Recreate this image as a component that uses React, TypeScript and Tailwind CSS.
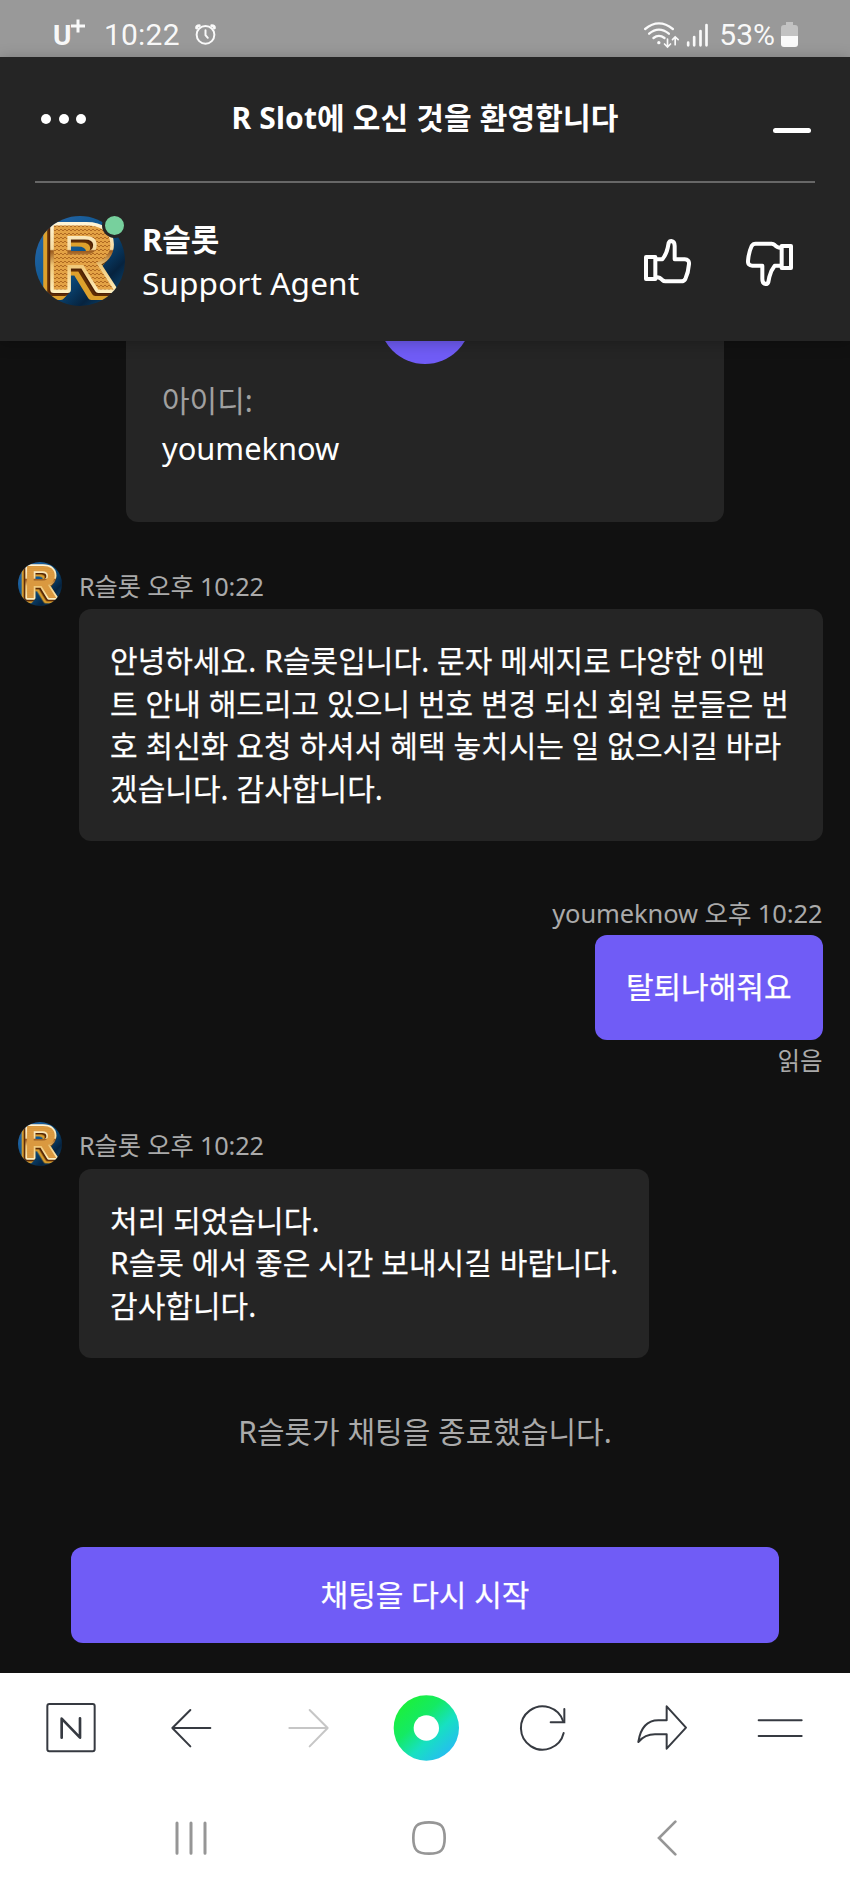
import { useId } from 'react'
import type { ReactNode } from 'react'

function Avatar({ className }: { className: string }) {
  const id = useId()

  return (
    <svg viewBox="0 0 90 90" className={`overflow-visible ${className}`}>
      <defs>
        <clipPath id={`${id}c`}>
          <circle cx="45" cy="45" r="45" />
        </clipPath>
        <linearGradient id={`${id}b`} x1="0" y1="0" x2="1" y2="1">
          <stop offset="0" stopColor="#2c6bb0" />
          <stop offset="0.5" stopColor="#0a5288" />
          <stop offset="0.75" stopColor="#06233f" />
          <stop offset="1" stopColor="#0a568a" />
        </linearGradient>
        <linearGradient id={`${id}e`} gradientUnits="userSpaceOnUse" x1="0" y1="6" x2="0" y2="78">
          <stop offset="0" stopColor="#fff6da" />
          <stop offset="0.38" stopColor="#f5dba0" />
          <stop offset="0.4" stopColor="#9c5a1c" />
          <stop offset="0.6" stopColor="#f0c878" />
          <stop offset="1" stopColor="#fff2c4" />
        </linearGradient>
        <pattern id={`${id}p`} width="4" height="4" patternUnits="userSpaceOnUse">
          <rect width="4" height="4" fill="#e3a245" />
          <path d="M0 3L2 1L4 3" stroke="#b06a22" strokeWidth="1" fill="none" />
        </pattern>
      </defs>
      <g clipPath={`url(#${id}c)`}>
        <rect width="90" height="90" fill={`url(#${id}b)`} />
        <text
          x="12.5"
          y="73"
          textLength="68"
          lengthAdjust="spacingAndGlyphs"
          fill={`url(#${id}p)`}
          stroke={`url(#${id}e)`}
          strokeWidth="7"
          strokeLinejoin="round"
          className="font-['Liberation_Sans',sans-serif] text-[93px] font-bold [paint-order:stroke] [filter:drop-shadow(-1px_1px_0_#4a1f05)_drop-shadow(-2px_2px_0_#5e2c06)_drop-shadow(-4px_4px_0_#dda02c)]"
        >
          R
        </text>
      </g>
    </svg>
  )
}

function StatusBar() {
  return (
    <div className="flex h-[57px] items-center bg-[#999999] pt-[12px] pl-[53px] pr-[52px] font-['Roboto',sans-serif] text-[30px] leading-none text-white/95">
      <span className="flex w-[51px]">
        <span className="mt-[2px] text-[28px] font-bold">U</span>
        <svg viewBox="0 0 14 14" className="mt-[-1px] h-[14px] w-[14px]">
          <path d="M7 0.5V13.5M0 7H14" stroke="currentColor" strokeWidth="3" />
        </svg>
      </span>
      <span className="tracking-[0.2px]">10:22</span>
      <svg viewBox="580 70 70 68" className="ml-[14px] h-[23px] w-[23px]" fill="none" stroke="currentColor">
        <circle cx="615" cy="105" r="27" strokeWidth="6" />
        <path d="M615 91V106L622 114" strokeWidth="6" strokeLinecap="round" />
        <path d="M588 84Q588 77 596 77M634 77Q642 77 642 84" strokeWidth="9" strokeLinecap="round" />
      </svg>

      <svg viewBox="655 60 200 84" className="ml-auto h-[28px] w-[67px]" fill="none" stroke="currentColor" strokeLinecap="round">
        <path d="M661 84Q702 50 744 84M673 98Q702 74 732 98M686 111Q702 98 719 111" strokeWidth="7" />
        <circle cx="702" cy="125" r="5" fill="currentColor" stroke="none" />
        <path d="M728 114V137M719 129L728 138L737 129M751 131V109M743 116L751 108L760 116" strokeWidth="5" />
        <path d="M790 125V133M808 108V133M827 90V133M845 72V133" strokeWidth="8" />
      </svg>
      <span className="ml-[9px] tracking-[0px]">53%</span>
      <svg viewBox="0 0 17 25" className="ml-[6px] h-[25px] w-[17px]">
        <path d="M5 0H12V3H14Q17 3 17 6V14H0V6Q0 3 3 3H5Z" fill="#c2c2c2" />
        <path d="M0 14H17V22Q17 25 14 25H3Q0 25 0 22Z" fill="#fafafa" />
      </svg>
    </div>
  )
}

function Thumb({ className = '' }: { className?: string }) {
  return (
    <svg viewBox="656 147 141 135" className={`h-[45px] w-[47px] ${className}`} fill="none" stroke="white" strokeWidth="12" strokeLinejoin="round">
      <rect x="662" y="201" width="28" height="66" />
      <path d="M692 208H711Q723 193 727 174L730 159Q732 153 738 153Q748 154 748 168V208H778Q792 209 791 222Q789 248 780 267Q776 274 768 274H720Q715 274 711 270Q703 261 692 262" />
    </svg>
  )
}

function Header() {
  return (
    <header className="relative z-10 h-[284px] bg-[#252525] px-[35px] text-white shadow-[0_2px_14px_rgba(0,0,0,0.25)]">
      <div className="flex h-[126px] items-center justify-between border-b-2 border-[#676767] pl-[6px] pr-[4px]">
        <div className="flex w-[45px] justify-between">
          <span className="size-[10px] rounded-full bg-white" />
          <span className="size-[10px] rounded-full bg-white" />
          <span className="size-[10px] rounded-full bg-white" />
        </div>
        <h1 className="mr-[9px] -mt-[2px] text-[30px] font-bold leading-[40px] tracking-[0.15px]">R Slot에 오신 것을 환영합니다</h1>
        <span className="mt-[22px] h-[5px] w-[38px] rounded-full bg-white" />
      </div>
      <div className="flex items-center pt-[33px]">
        <div className="relative size-[90px]">
          <Avatar className="size-[90px]" />
          <span className="absolute -right-[2px] -top-[3px] size-[25px] rounded-full border-[3px] border-[#252525] bg-[#77d09d]" />
        </div>
        <div className="ml-[17px] text-[31.6px] leading-[43px]">
          <div className="text-[31px] font-bold">R슬롯</div>
          <div className="tracking-[0.1px]">Support Agent</div>
        </div>
        <div className="ml-auto mr-[22px] flex gap-[55px]">
          <Thumb className="mt-[2px]" />
          <Thumb className="mt-[4px] rotate-180" />
        </div>
      </div>
    </header>
  )
}

function AgentMessage({ children, className = '' }: { children: ReactNode; className?: string }) {
  return (
    <div className={`flex pl-[18px] ${className}`}>
      <Avatar className="size-[44px] shrink-0" />
      <div className="ml-[17px]">
        <div className="flex h-[47px] items-center pt-[2px] text-[25.3px] tracking-[-0.15px] text-[#aaaaaa]">R슬롯 오후 10:22</div>
        <div className="w-fit max-w-[743.5px] rounded-xl bg-[#252525] p-[31px] text-[30px] leading-[42.5px] tracking-[0.05px] break-all whitespace-pre-line text-white [-webkit-text-stroke:0.25px_white]">
          {children}
        </div>
      </div>
    </div>
  )
}

const icon = 'size-[72px] fill-none stroke-[#363a41] stroke-[6]'

function BrowserBar() {
  return (
    <nav className="grid grid-cols-7 justify-items-center px-[12px] pt-[19px]">
      <svg viewBox="105 95 216 216" className={icon} strokeLinecap="round" strokeLinejoin="round">
        <rect x="142" y="131" width="142" height="142" rx="6" />
        <path d="M185 232V175L240 232V174" className="stroke-[8]" />
      </svg>
      <svg viewBox="459 95 216 216" className={icon} strokeLinecap="round" strokeLinejoin="round">
        <path d="M631 203H517M571 149L517 203L571 258" />
      </svg>
      <svg viewBox="813 95 216 216" className="size-[72px] fill-none stroke-[#c6c6c6] stroke-[6]" strokeLinecap="round" strokeLinejoin="round">
        <path d="M868 203H983M929 149L983 203L929 258" />
      </svg>
      <svg viewBox="1167 95 216 216" className="size-[72px]">
        <defs>
          <linearGradient id="ring" x1="0.12" y1="0.12" x2="0.85" y2="0.9">
            <stop offset="0" stopColor="#1cf03a" />
            <stop offset="0.35" stopColor="#14ea63" />
            <stop offset="0.65" stopColor="#17e0c2" />
            <stop offset="1" stopColor="#26bcf2" />
          </linearGradient>
        </defs>
        <circle cx="1279" cy="203" r="98" fill="url(#ring)" />
        <circle cx="1279" cy="203" r="38" fill="white" />
      </svg>
      <svg viewBox="246 95 216 216" className={icon} strokeLinecap="round">
        <path d="M416 218A65 65 0 1 1 415 184" />
        <path d="M418 146V186H377" />
      </svg>
      <svg viewBox="600 95 216 216" className={icon} strokeLinecap="round" strokeLinejoin="round">
        <path d="M725 138L783 202L725 265V222H690Q660 222 640 245Q650 180 700 180H725Z" />
      </svg>
      <svg viewBox="954 95 216 216" className={icon} strokeLinecap="round">
        <path d="M1001 180H1130M1001 227H1130" />
      </svg>
    </nav>
  )
}

function SystemBar() {
  return (
    <div className="grid grid-cols-3 justify-items-center pl-[72px] pr-[64px] pt-[56px] text-[#969696]">
      <svg viewBox="514 479 120 108" className="h-[36px] w-[40px]" stroke="currentColor" strokeWidth="9" strokeLinecap="round">
        <path d="M532 488V579M574 488V579M616 488V579" />
      </svg>
      <svg viewBox="0 0 108 108" className="size-[36px]" fill="none" stroke="currentColor" strokeWidth="8">
        <path d="M54 7C90 7 101 18 101 54S90 101 54 101S7 90 7 54S18 7 54 7Z" />
      </svg>
      <svg viewBox="674 479 108 108" className="size-[36px]" fill="none" stroke="currentColor" strokeWidth="8" strokeLinecap="round">
        <path d="M753 484L704 533L753 582" />
      </svg>
    </div>
  )
}

export default function App() {
  return (
    <div className="flex h-[1889px] w-[850px] flex-col overflow-hidden bg-[#111111] font-['Noto_Sans','Noto_Sans_CJK_KR',sans-serif]">
      <StatusBar />
      <Header />

      <main className="h-[1331.5px] shrink-0 overflow-hidden">
        <section className="relative ml-[126px] h-[181px] w-[597.5px] rounded-b-xl bg-[#252525] px-[36px]">
          <span className="absolute -top-[69px] left-[253px] size-[92px] rounded-full bg-[#705cf6]" />
          <div className="pt-[36px] text-[30px] leading-[47px] text-[#a0a0a0]">아이디:</div>
          <div className="text-[30.8px] leading-[48px] text-white">youmeknow</div>
        </section>

        <AgentMessage className="mt-[40px]">
          {'안녕하세요. R슬롯입니다. 문자 메세지로 다양한 이벤\n트 안내 해드리고 있으니 번호 변경 되신 회원 분들은 번호 최신화 요청 하셔서 혜택 놓치시는 일 없으시길 바라\n겠습니다. 감사합니다.'}
        </AgentMessage>

        <div className="mr-[27.5px] mt-[54px] flex flex-col items-end text-[25.5px] tracking-[-0.1px] text-[#aaaaaa]">
          <div className="h-[40px] leading-[36px]">youmeknow 오후 10:22</div>
          <div className="rounded-xl bg-[#705cf6] p-[31px] text-[30px] leading-[42.5px] tracking-[0px] text-white [-webkit-text-stroke:0.25px_white]">
            탈퇴나해줘요
          </div>
          <div className="h-[42px] text-[24.5px] leading-[42px]">읽음</div>
        </div>

        <AgentMessage className="mt-[40px]">
          {'처리 되었습니다.\nR슬롯 에서 좋은 시간 보내시길 바랍니다.\n감사합니다.'}
        </AgentMessage>

        <p className="mt-[53px] text-center text-[30px] leading-[42px] text-[#aaaaaa]">R슬롯가 채팅을 종료했습니다.</p>

        <button className="ml-[71px] mt-[93.5px] flex h-[96px] w-[708px] items-center justify-center rounded-xl bg-[#705cf6] text-[30px] text-white [-webkit-text-stroke:0.25px_white]">
          채팅을 다시 시작
        </button>
      </main>

      <footer className="h-[216.5px] shrink-0 bg-white">
        <BrowserBar />
        <SystemBar />
      </footer>
    </div>
  )
}
